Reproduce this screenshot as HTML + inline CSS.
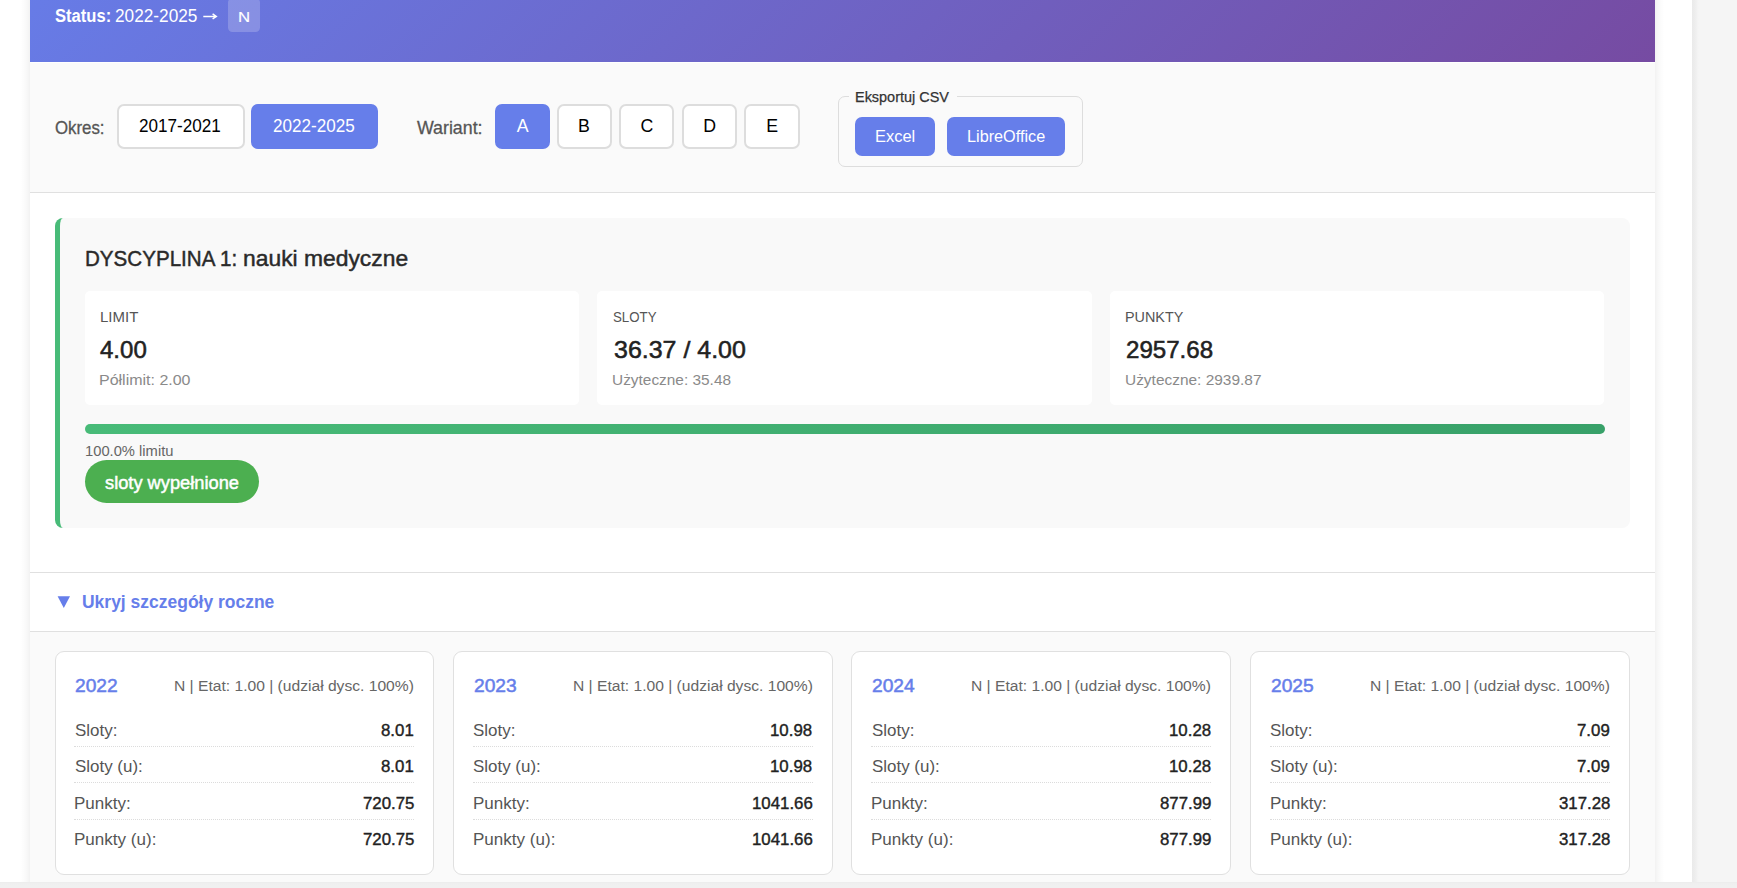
<!DOCTYPE html>
<html lang="pl">
<head>
<meta charset="utf-8">
<title>Symulacja slotów</title>
<style>
*{box-sizing:border-box;margin:0;padding:0}
html,body{width:1737px;height:888px;overflow:hidden;background:#fff}
body{position:relative;font-family:"Liberation Sans",sans-serif;color:#333}
.abs{position:absolute}
.t{position:absolute;line-height:1;white-space:pre;transform-origin:0 0}
/* page chrome */
#lshadow{left:21px;top:0;width:9px;height:882px;background:linear-gradient(90deg,#fff 0,#fdfdfd 1.5px,#fcfcfc 3px,#fafafa 4.5px,#f8f8f8 6px,#f5f5f5 7.5px,#f2f2f2 9px)}
#rshadow{left:1655px;top:0;width:9px;height:882px;background:linear-gradient(90deg,#f2f2f2 0,#f5f5f5 1.5px,#f8f8f8 3px,#fafafa 4.5px,#fcfcfc 6px,#fdfdfd 7.5px,#fff 9px)}
#vscroll{left:1692px;top:0;width:45px;height:888px;background:linear-gradient(90deg,#eaeaea 0,#ececec 2px,#efefef 4px,#f3f3f3 5.5px,#f5f5f5 7px)}
#hscroll{left:0;top:882px;width:1737px;height:6px;background:linear-gradient(180deg,#ececec 0,#efefef 1.5px,#f0f0f0 3px)}
/* main column */
#main{left:30px;top:0;width:1625px;height:882px;background:#fafafa;overflow:hidden}
#header{left:0;top:0;width:1625px;height:62px;overflow:hidden}
#header .grad{position:absolute;left:0;bottom:0;width:1625px;height:150px;background:linear-gradient(135deg,#667eea 0%,#764ba2 100%)}
#badge{left:198px;top:-2.5px;width:32px;height:34.3px;border-radius:4.5px;background:rgba(255,255,255,.2)}
#hline{left:0;top:62px;width:1625px;height:1px;background:#fff}
/* controls */
#controls{left:0;top:63px;width:1625px;height:130px;background:#fafafa;border-bottom:1px solid #e0e0e0}
.btn{top:41px;height:45px;border:2px solid #ddd;border-radius:7px;background:#fff}
.btn.on{background:#667eea;border-color:#667eea}
#export{left:808px;top:33px;width:245px;height:71px;border:1px solid #ddd;border-radius:7px}
#export .leg{position:absolute;left:10px;top:-2px;width:108px;height:4px;background:#fafafa}
.ebtn{top:20px;height:39px;border-radius:7px;background:#667eea}
/* discipline section */
#sec{left:0;top:193px;width:1625px;height:380px;background:#fff;border-bottom:1px solid #e0e0e0}
#card{left:25px;top:25px;width:1575px;height:310px;background:#f9f9f9;border-left:5.5px solid #48bb78;border-radius:8px}
.stat{top:73px;width:494.5px;height:114px;background:#fff;border-radius:5px}
#bar{left:24.5px;top:206px;width:1520px;height:10px;border-radius:5px;background:linear-gradient(90deg,#48bb78,#38a169)}
#pill{left:24.5px;top:242px;width:174px;height:43px;border-radius:22px;background:#4caf50}
/* toggle */
#toggle{left:0;top:573px;width:1625px;height:59px;background:#fff;border-bottom:1px solid #e0e0e0}
#tri{left:27.5px;top:23.3px;width:0;height:0;border-left:6.2px solid transparent;border-right:6.2px solid transparent;border-top:11.6px solid #667eea}
/* years */
#years{left:0;top:632px;width:1625px;height:250px;background:#fafafa}
.yc{top:19px;width:379.6px;height:224px;background:#fff;border:1px solid #e0e0e0;border-radius:9px}
.dot{left:18px;width:340px;height:0;border-top:1px dotted #dcdcdc}
</style>
</head>
<body>
<div id="lshadow" class="abs"></div>
<div id="main" class="abs">
  <div id="header" class="abs"><div class="grad"></div><div id="badge" class="abs"></div></div>
  <div id="hline" class="abs"></div>
  <div id="controls" class="abs">
    <div class="btn abs" style="left:87px;width:127.6px"></div>
    <div class="btn on abs" style="left:221px;width:127px"></div>
    <div class="btn on abs" style="left:465px;width:55px"></div>
    <div class="btn abs" style="left:527px;width:55px"></div>
    <div class="btn abs" style="left:589.3px;width:55.2px"></div>
    <div class="btn abs" style="left:652px;width:55px"></div>
    <div class="btn abs" style="left:714px;width:55.7px"></div>
    <div id="export" class="abs"><div class="leg"></div>
      <div class="ebtn abs" style="left:16px;width:80px"></div>
      <div class="ebtn abs" style="left:108px;width:118px"></div>
    </div>
  </div>
  <div id="sec" class="abs">
    <div id="card" class="abs">
      <div class="stat abs" style="left:24.5px"></div>
      <div class="stat abs" style="left:536.5px;width:495.4px"></div>
      <div class="stat abs" style="left:1049.5px"></div>
      <div id="bar" class="abs"></div>
      <div id="pill" class="abs"></div>
    </div>
  </div>
  <div id="toggle" class="abs"><svg class="abs" style="left:27px;top:23px" width="14" height="13" viewBox="0 0 14 13"><path d="M0.6 0.3H13.0L6.8 11.9Z" fill="#667eea"/></svg></div>
  <div id="years" class="abs">
<div class="yc abs" style="left:25.0px;width:379.0px"><div class="dot abs" style="top:94px;left:18.0px"></div><div class="dot abs" style="top:130px;left:18.0px"></div><div class="dot abs" style="top:167px;left:18.0px"></div></div>
<div class="yc abs" style="left:423.0px;width:379.6px"><div class="dot abs" style="top:94px;left:18.6px"></div><div class="dot abs" style="top:130px;left:18.6px"></div><div class="dot abs" style="top:167px;left:18.6px"></div></div>
<div class="yc abs" style="left:821.0px;width:379.6px"><div class="dot abs" style="top:94px;left:19.2px"></div><div class="dot abs" style="top:130px;left:19.2px"></div><div class="dot abs" style="top:167px;left:19.2px"></div></div>
<div class="yc abs" style="left:1220.0px;width:379.6px"><div class="dot abs" style="top:94px;left:18.8px"></div><div class="dot abs" style="top:130px;left:18.8px"></div><div class="dot abs" style="top:167px;left:18.8px"></div></div>
  </div>
</div>
<div id="rshadow" class="abs"></div>
<div id="vscroll" class="abs"></div>
<div id="hscroll" class="abs"></div>
<div id="texts">
<span class="t" style="left:54.50px;top:6.61px;font-size:18.3px;color:#fff;font-weight:700;transform:scaleX(0.9066);">Status:</span>
<span class="t" style="left:115.00px;top:6.61px;font-size:18.3px;color:#fff;transform:scaleX(0.9425);">2022-2025</span>
<span class="t" style="left:237.96px;top:9.69px;font-size:14.66px;color:#fff;-webkit-text-stroke:0.15px #fff;transform:scaleX(1.1444);">N</span>
<span class="t" style="left:54.80px;top:118.63px;font-size:18.16px;color:#555;-webkit-text-stroke:0.3px #555;transform:scaleX(0.9264);">Okres:</span>
<span class="t" style="left:138.70px;top:117.68px;font-size:17.74px;color:#000;transform:scaleX(0.9635);">2017-2021</span>
<span class="t" style="left:273.40px;top:117.68px;font-size:17.74px;color:#fff;transform:scaleX(0.9647);">2022-2025</span>
<span class="t" style="left:417.48px;top:118.63px;font-size:18.16px;color:#555;-webkit-text-stroke:0.3px #555;transform:scaleX(0.9791);">Wariant:</span>
<span class="t" style="left:516.80px;top:117.98px;font-size:17.74px;color:#fff;">A</span>
<span class="t" style="left:578.00px;top:117.98px;font-size:17.74px;color:#000;">B</span>
<span class="t" style="left:640.40px;top:117.98px;font-size:17.74px;color:#000;">C</span>
<span class="t" style="left:703.20px;top:117.98px;font-size:17.74px;color:#000;">D</span>
<span class="t" style="left:766.20px;top:117.98px;font-size:17.74px;color:#000;">E</span>
<span class="t" style="left:855.40px;top:90.25px;font-size:14.94px;color:#333;-webkit-text-stroke:0.25px #333;transform:scaleX(0.9673);">Eksportuj CSV</span>
<span class="t" style="left:874.69px;top:127.87px;font-size:16.34px;color:#fff;transform:scaleX(1.0079);">Excel</span>
<span class="t" style="left:966.71px;top:127.87px;font-size:16.34px;color:#fff;transform:scaleX(0.9936);">LibreOffice</span>
<span class="t" style="left:84.55px;top:248.37px;font-size:21.65px;color:#2a2a2a;-webkit-text-stroke:0.45px #2a2a2a;transform:scaleX(0.9513);">DYSCYPLINA 1:</span>
<span class="t" style="left:242.64px;top:248.37px;font-size:21.65px;color:#2a2a2a;-webkit-text-stroke:0.45px #2a2a2a;transform:scaleX(1.0561);">nauki medyczne</span>
<span class="t" style="left:99.53px;top:308.88px;font-size:15.5px;color:#555;transform:scaleX(0.9667);">LIMIT</span>
<span class="t" style="left:612.90px;top:308.88px;font-size:15.5px;color:#555;transform:scaleX(0.8569);">SLOTY</span>
<span class="t" style="left:1125.37px;top:308.88px;font-size:15.5px;color:#555;transform:scaleX(0.9274);">PUNKTY</span>
<span class="t" style="left:100.30px;top:337.93px;font-size:24.3px;color:#222;-webkit-text-stroke:0.55px #222;transform:scaleX(0.9894);">4.00</span>
<span class="t" style="left:613.60px;top:337.93px;font-size:24.3px;color:#222;-webkit-text-stroke:0.55px #222;transform:scaleX(1.0273);">36.37 / 4.00</span>
<span class="t" style="left:1126.10px;top:337.93px;font-size:24.3px;color:#222;-webkit-text-stroke:0.55px #222;transform:scaleX(0.9920);">2957.68</span>
<span class="t" style="left:99.20px;top:373.30px;font-size:14.53px;color:#8a8a8a;transform:scaleX(1.1012);">Półlimit: 2.00</span>
<span class="t" style="left:612.34px;top:373.30px;font-size:14.53px;color:#8a8a8a;transform:scaleX(1.0613);">Użyteczne: 35.48</span>
<span class="t" style="left:1125.34px;top:373.30px;font-size:14.53px;color:#8a8a8a;transform:scaleX(1.0638);">Użyteczne: 2939.87</span>
<span class="t" style="left:85.08px;top:443.50px;font-size:14.53px;color:#666;transform:scaleX(1.0151);">100.0% limitu</span>
<span class="t" style="left:104.60px;top:473.15px;font-size:19.2px;color:#fff;-webkit-text-stroke:0.5px #fff;transform:scaleX(0.9518);">sloty wypełnione</span>
<span class="t" style="left:81.90px;top:593.78px;font-size:17.74px;color:#667eea;font-weight:700;transform:scaleX(0.9856);">Ukryj szczegóły roczne</span>
<span class="t" style="left:75.10px;top:677.19px;font-size:18.44px;color:#667eea;-webkit-text-stroke:0.5px #667eea;transform:scaleX(1.0415);">2022</span>
<span class="t" style="left:174.26px;top:678.13px;font-size:15.08px;color:#666;transform:scaleX(1.0357);">N | Etat: 1.00 | (udział dysc. 100%)</span>
<span class="t" style="left:74.90px;top:722.34px;font-size:17.32px;color:#555;transform:scaleX(0.9786);">Sloty:</span>
<span class="t" style="left:74.90px;top:758.24px;font-size:17.32px;color:#555;transform:scaleX(0.9779);">Sloty (u):</span>
<span class="t" style="left:74.42px;top:794.94px;font-size:17.32px;color:#555;transform:scaleX(0.9821);">Punkty:</span>
<span class="t" style="left:74.42px;top:830.94px;font-size:17.32px;color:#555;transform:scaleX(0.9841);">Punkty (u):</span>
<span class="t" style="left:380.96px;top:722.34px;font-size:17.32px;color:#222;-webkit-text-stroke:0.4px #222;transform:scaleX(0.9717);">8.01</span>
<span class="t" style="left:380.96px;top:758.24px;font-size:17.32px;color:#222;-webkit-text-stroke:0.4px #222;transform:scaleX(0.9717);">8.01</span>
<span class="t" style="left:362.50px;top:794.94px;font-size:17.32px;color:#222;-webkit-text-stroke:0.4px #222;transform:scaleX(0.9717);">720.75</span>
<span class="t" style="left:362.50px;top:830.94px;font-size:17.32px;color:#222;-webkit-text-stroke:0.4px #222;transform:scaleX(0.9717);">720.75</span>
<span class="t" style="left:473.60px;top:677.19px;font-size:18.44px;color:#667eea;-webkit-text-stroke:0.5px #667eea;transform:scaleX(1.0415);">2023</span>
<span class="t" style="left:572.76px;top:678.13px;font-size:15.08px;color:#666;transform:scaleX(1.0357);">N | Etat: 1.00 | (udział dysc. 100%)</span>
<span class="t" style="left:473.40px;top:722.34px;font-size:17.32px;color:#555;transform:scaleX(0.9786);">Sloty:</span>
<span class="t" style="left:473.40px;top:758.24px;font-size:17.32px;color:#555;transform:scaleX(0.9779);">Sloty (u):</span>
<span class="t" style="left:472.92px;top:794.94px;font-size:17.32px;color:#555;transform:scaleX(0.9821);">Punkty:</span>
<span class="t" style="left:472.92px;top:830.94px;font-size:17.32px;color:#555;transform:scaleX(0.9841);">Punkty (u):</span>
<span class="t" style="left:770.25px;top:722.34px;font-size:17.32px;color:#222;-webkit-text-stroke:0.4px #222;transform:scaleX(0.9717);">10.98</span>
<span class="t" style="left:770.25px;top:758.24px;font-size:17.32px;color:#222;-webkit-text-stroke:0.4px #222;transform:scaleX(0.9717);">10.98</span>
<span class="t" style="left:751.78px;top:794.94px;font-size:17.32px;color:#222;-webkit-text-stroke:0.4px #222;transform:scaleX(0.9717);">1041.66</span>
<span class="t" style="left:751.78px;top:830.94px;font-size:17.32px;color:#222;-webkit-text-stroke:0.4px #222;transform:scaleX(0.9717);">1041.66</span>
<span class="t" style="left:872.10px;top:677.19px;font-size:18.44px;color:#667eea;-webkit-text-stroke:0.5px #667eea;transform:scaleX(1.0415);">2024</span>
<span class="t" style="left:971.26px;top:678.13px;font-size:15.08px;color:#666;transform:scaleX(1.0357);">N | Etat: 1.00 | (udział dysc. 100%)</span>
<span class="t" style="left:871.90px;top:722.34px;font-size:17.32px;color:#555;transform:scaleX(0.9786);">Sloty:</span>
<span class="t" style="left:871.90px;top:758.24px;font-size:17.32px;color:#555;transform:scaleX(0.9779);">Sloty (u):</span>
<span class="t" style="left:871.42px;top:794.94px;font-size:17.32px;color:#555;transform:scaleX(0.9821);">Punkty:</span>
<span class="t" style="left:871.42px;top:830.94px;font-size:17.32px;color:#555;transform:scaleX(0.9841);">Punkty (u):</span>
<span class="t" style="left:1168.75px;top:722.34px;font-size:17.32px;color:#222;-webkit-text-stroke:0.4px #222;transform:scaleX(0.9717);">10.28</span>
<span class="t" style="left:1168.75px;top:758.24px;font-size:17.32px;color:#222;-webkit-text-stroke:0.4px #222;transform:scaleX(0.9717);">10.28</span>
<span class="t" style="left:1160.00px;top:794.94px;font-size:17.32px;color:#222;-webkit-text-stroke:0.4px #222;transform:scaleX(0.9717);">877.99</span>
<span class="t" style="left:1160.00px;top:830.94px;font-size:17.32px;color:#222;-webkit-text-stroke:0.4px #222;transform:scaleX(0.9717);">877.99</span>
<span class="t" style="left:1270.60px;top:677.19px;font-size:18.44px;color:#667eea;-webkit-text-stroke:0.5px #667eea;transform:scaleX(1.0415);">2025</span>
<span class="t" style="left:1369.76px;top:678.13px;font-size:15.08px;color:#666;transform:scaleX(1.0357);">N | Etat: 1.00 | (udział dysc. 100%)</span>
<span class="t" style="left:1270.40px;top:722.34px;font-size:17.32px;color:#555;transform:scaleX(0.9786);">Sloty:</span>
<span class="t" style="left:1270.40px;top:758.24px;font-size:17.32px;color:#555;transform:scaleX(0.9779);">Sloty (u):</span>
<span class="t" style="left:1269.92px;top:794.94px;font-size:17.32px;color:#555;transform:scaleX(0.9821);">Punkty:</span>
<span class="t" style="left:1269.92px;top:830.94px;font-size:17.32px;color:#555;transform:scaleX(0.9841);">Punkty (u):</span>
<span class="t" style="left:1576.96px;top:722.34px;font-size:17.32px;color:#222;-webkit-text-stroke:0.4px #222;transform:scaleX(0.9717);">7.09</span>
<span class="t" style="left:1576.96px;top:758.24px;font-size:17.32px;color:#222;-webkit-text-stroke:0.4px #222;transform:scaleX(0.9717);">7.09</span>
<span class="t" style="left:1558.50px;top:794.94px;font-size:17.32px;color:#222;-webkit-text-stroke:0.4px #222;transform:scaleX(0.9717);">317.28</span>
<span class="t" style="left:1558.50px;top:830.94px;font-size:17.32px;color:#222;-webkit-text-stroke:0.4px #222;transform:scaleX(0.9717);">317.28</span>
<svg class="abs" style="left:202px;top:9px" width="17" height="14" viewBox="0 0 17 14"><path d="M1.3 7.45H14M10.6 4.9L14.3 7.45L10.6 10" fill="none" stroke="#fff" stroke-width="1.5"/></svg>
</div>
</body>
</html>
